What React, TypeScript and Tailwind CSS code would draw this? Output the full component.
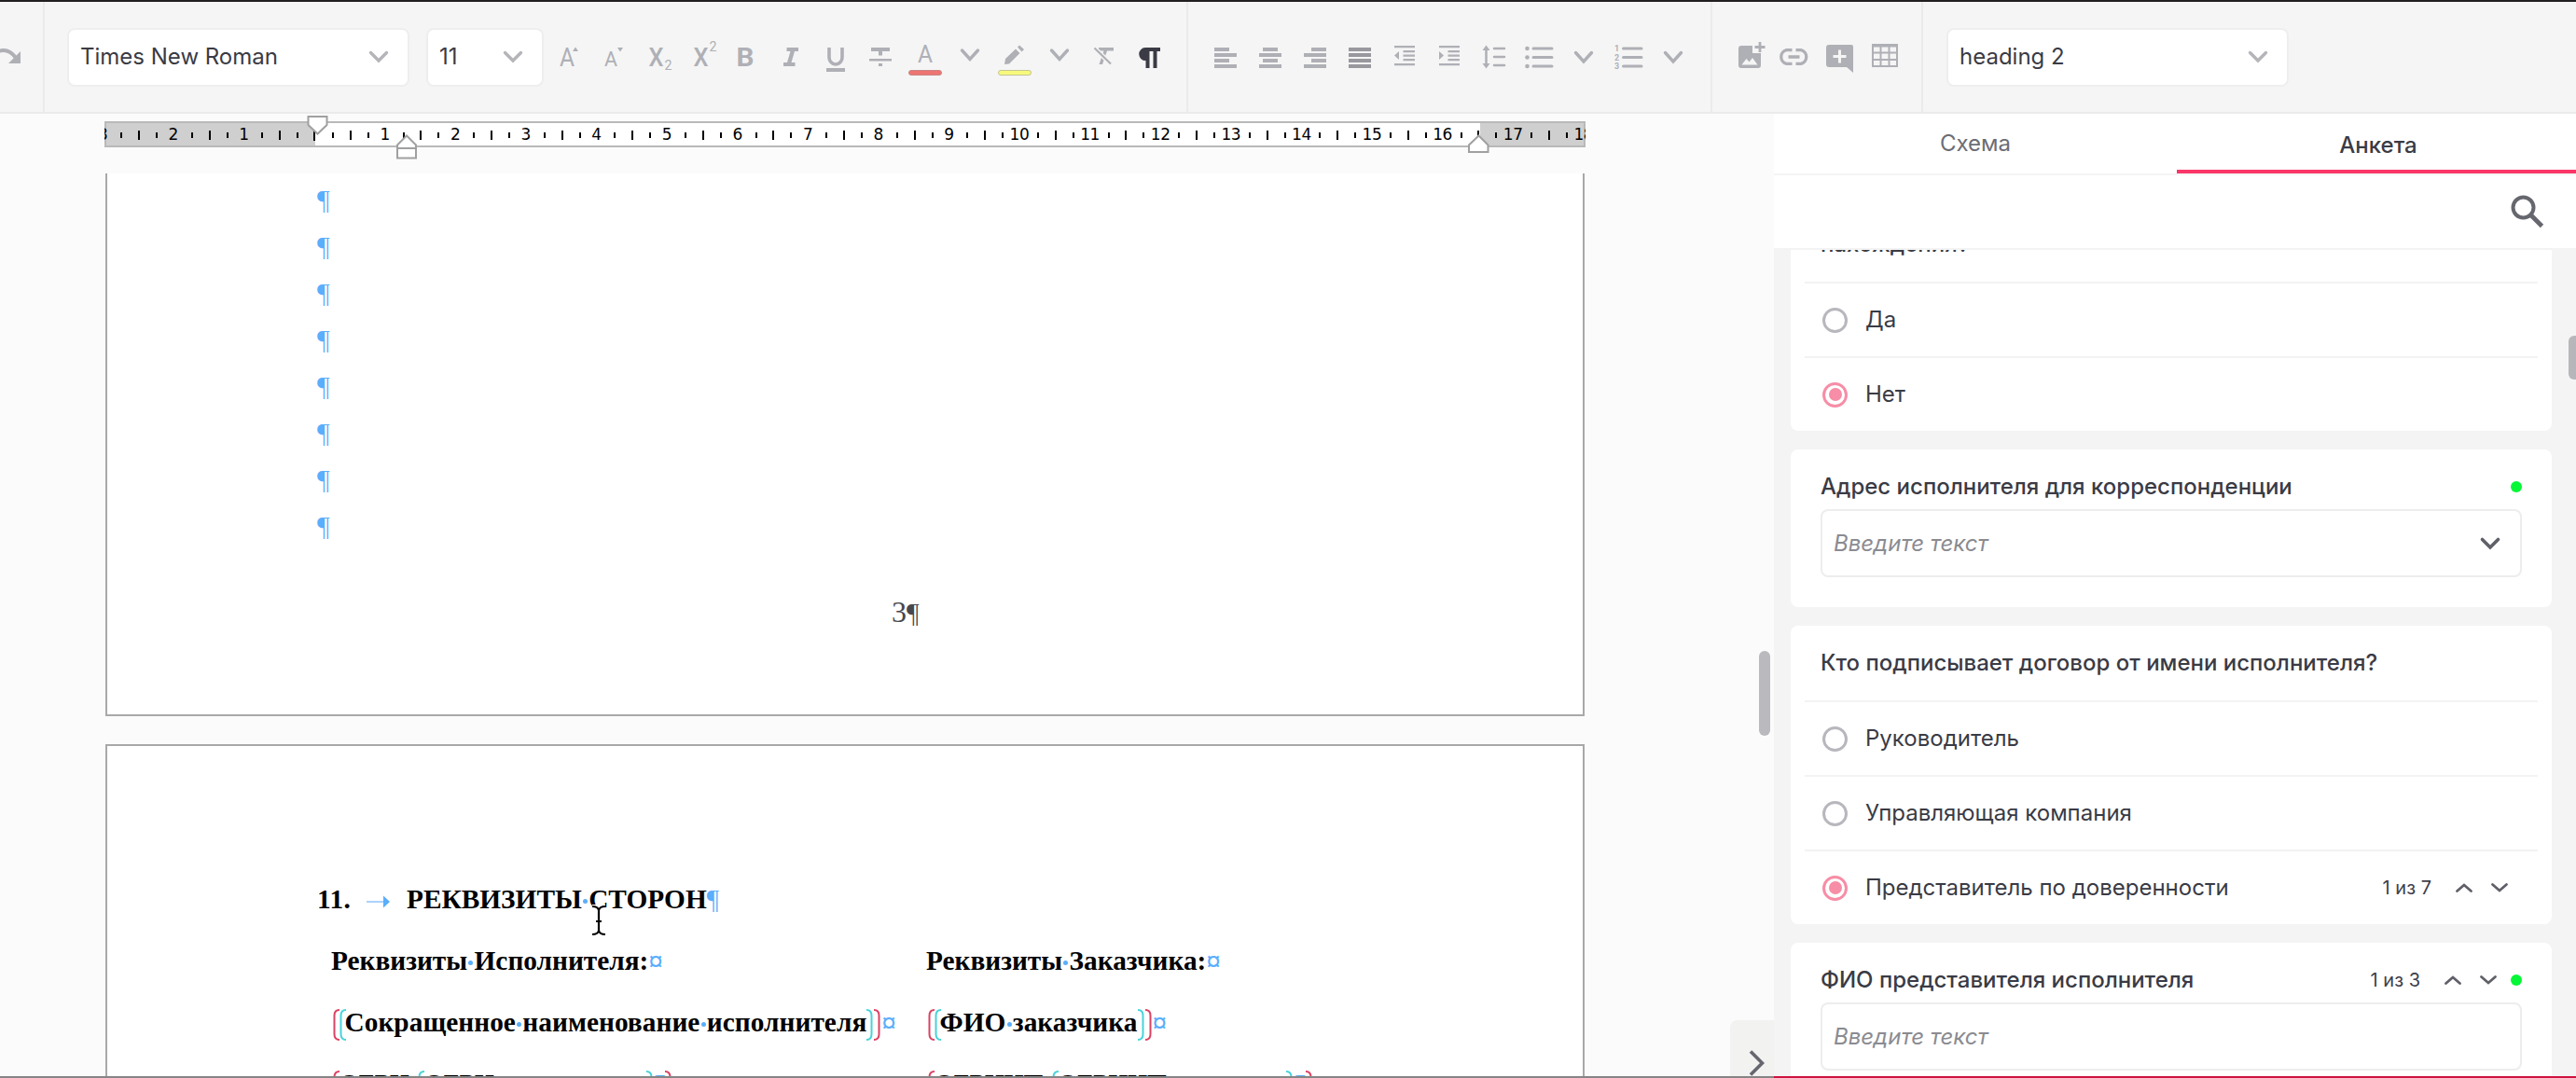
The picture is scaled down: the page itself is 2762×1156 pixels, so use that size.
import React, { useState } from 'react';

const ICON = '#afb0b6';

const Slot: React.FC<{ title: string; children: React.ReactNode }> = ({ title, children }) => (
  <button title={title} className="w-12 h-12 shrink-0">
    <svg width="48" height="48" viewBox="0 0 48 48" fill={ICON} className="block overflow-visible">
      {children}
    </svg>
  </button>
);

interface GlyphProps {
  x: number;
  y: number;
  size: number;
  width?: number;
  weight?: number;
  children: string;
}

const Glyph: React.FC<GlyphProps> = ({ x, y, size, width, weight = 400, children }) => (
  <text
    x={x}
    y={y}
    fontSize={size}
    fontWeight={weight}
    textLength={width}
    lengthAdjust="spacingAndGlyphs"
    className="font-['Roboto',sans-serif]"
  >
    {children}
  </text>
);

const SlotChevron: React.FC<{ y?: number }> = ({ y = 18 }) => (
  <Slot title="Ещё">
    <path d={`M15.5 ${y}L24 ${y + 9.5}L32.5 ${y}`} fill="none" stroke={ICON} strokeWidth="3.4" strokeLinecap="round" />
  </Slot>
);

interface ChevronProps {
  w?: number;
  h?: number;
  up?: boolean;
  color?: string;
  stroke?: number;
}

const Chevron: React.FC<ChevronProps> = ({ w = 20, h = 12, up, color = '#b5b5b9', stroke = 3.4 }) => (
  <svg width={w} height={h} viewBox={`0 0 ${w} ${h}`} fill="none" className="shrink-0 overflow-visible">
    <path
      d={up ? `M1.5 ${h - 1.5}L${w / 2} 2L${w - 1.5} ${h - 1.5}` : `M1.5 1.5L${w / 2} ${h - 2}L${w - 1.5} 1.5`}
      stroke={color}
      strokeWidth={stroke}
      strokeLinecap="round"
    />
  </svg>
);

const Select: React.FC<{ value: string; className: string }> = ({ value, className }) => (
  <div className={`h-[63px] shrink-0 bg-white border-2 border-[#eeeeee] rounded-lg flex items-center justify-between pl-3 pr-[21px] text-[24px] text-[#3a3b45] ${className}`}>
    <span className="whitespace-nowrap">{value}</span>
    <Chevron />
  </div>
);

const Divider = () => <div className="w-0.5 h-full shrink-0 bg-[#ebebeb]" />;

const Toolbar = () => (
  <div className="h-[122px] shrink-0 bg-[#f5f5f5] border-t-2 border-t-[#211f20] border-b-2 border-b-[#ebebeb] flex items-center">
    <div className="w-[46px] shrink-0">
      <svg width="24" height="18" viewBox="0 0 24 18" fill="none">
        <path d="M-4 4C4 0 11 2 17 10" stroke={ICON} strokeWidth="4" />
        <path d="M22 3V16H9Z" fill={ICON} />
      </svg>
    </div>
    <Divider />

    <div className="w-[1224px] shrink-0 flex items-center pl-6">
      <Select value="Times New Roman" className="w-[367px]" />
      <Select value="11" className="w-[126px] ml-[18px]" />
      <div className="flex ml-px">
        <Slot title="Увеличить шрифт">
          <Glyph x={16} y={34} size={27} width={16}>A</Glyph>
          <path d="M30 18L33 13.5L36 18Z" />
        </Slot>
        <Slot title="Уменьшить шрифт">
          <Glyph x={16} y={34} size={22} width={14}>A</Glyph>
          <path d="M30 14L33 18.5L36 14Z" />
        </Slot>
        <Slot title="Подстрочный">
          <Glyph x={15.5} y={34} size={27} width={16} weight={500}>X</Glyph>
          <Glyph x={32.5} y={38} size={14} width={8}>2</Glyph>
        </Slot>
        <Slot title="Надстрочный">
          <Glyph x={15.5} y={34} size={27} width={16} weight={500}>X</Glyph>
          <Glyph x={32.5} y={18} size={14} width={8}>2</Glyph>
        </Slot>
        <Slot title="Полужирный">
          <Glyph x={13.5} y={34} size={28} width={19} weight={700}>B</Glyph>
        </Slot>
        <Slot title="Курсив">
          <path d="M19.5 14H32V18H28L24.5 30H28.5V34H16V30H20L23.5 18H19.5Z" />
        </Slot>
        <Slot title="Подчеркнутый">
          <path d="M17 14V24.5A7 7.5 0 0 0 31 24.5V14" fill="none" stroke={ICON} strokeWidth="3.6" />
          <rect x="14" y="36" width="20" height="4" />
        </Slot>
        <Slot title="Зачеркнутый">
          <path d="M14 14H34V18H26V22.5H22V18H14ZM12 26H36V28.5H12ZM22 31H26V34H22Z" />
        </Slot>
        <Slot title="Цвет текста">
          <Glyph x={16} y={30} size={26} width={16}>A</Glyph>
          <rect x="6.5" y="38.5" width="35" height="5" rx="2.5" fill="#ee7572" stroke="#c98583" />
        </Slot>
        <SlotChevron y={17} />
        <Slot title="Маркер">
          <path d="M13 32L14 26L25 15.5L29.5 20L18 31.5ZM27 13.5L29 11.5L34 16L31.5 18.5Z" />
          <rect x="6.5" y="38.5" width="35" height="5" rx="2.5" fill="#f7f97c" stroke="#c4c592" />
        </Slot>
        <SlotChevron y={17} />
        <Slot title="Очистить формат">
          <path d="M18 14H34V17.5H27L22 32H18.5L23.5 17.5H18Z" />
          <path d="M13.5 14.5L31 31.5" stroke="#f5f5f5" strokeWidth="5" />
          <path d="M13.5 14.5L31 31.5" stroke={ICON} strokeWidth="2.2" />
        </Slot>
        <Slot title="Непечатаемые символы">
          <path d="M20 14H36V18H32.5V36H28.5V18H24.5V36H20.5V28A7 7 0 0 1 20 14Z" fill="#3a3b45" />
        </Slot>
      </div>
    </div>
    <Divider />

    <div className="w-[560px] shrink-0 flex pl-4">
      <Slot title="По левому краю">
        <path d="M12 14H28V18H12ZM12 20H36V24H12ZM12 26H28V30H12ZM12 32H36V36H12Z" />
      </Slot>
      <Slot title="По центру">
        <path d="M16 14H32V18H16ZM12 20H36V24H12ZM16 26H32V30H16ZM12 32H36V36H12Z" />
      </Slot>
      <Slot title="По правому краю">
        <path d="M20 14H36V18H20ZM12 20H36V24H12ZM20 26H36V30H20ZM12 32H36V36H12Z" />
      </Slot>
      <Slot title="По ширине">
        <path d="M12 14H36V18H12ZM12 20H36V24H12ZM12 26H36V30H12ZM12 32H36V36H12Z" fill="#98989e" />
      </Slot>
      <Slot title="Уменьшить отступ">
        <path d="M13 12H35V14.3H13ZM22.5 17H35V19.3H22.5ZM22.5 21.5H35V23.8H22.5ZM22.5 26H35V28.3H22.5ZM13 31H35V33.3H13ZM18 18V27L13 22.5Z" />
      </Slot>
      <Slot title="Увеличить отступ">
        <path d="M13 12H35V14.3H13ZM22.5 17H35V19.3H22.5ZM22.5 21.5H35V23.8H22.5ZM22.5 26H35V28.3H22.5ZM13 31H35V33.3H13ZM13 18V27L18 22.5Z" />
      </Slot>
      <Slot title="Межстрочный интервал">
        <path d="M24 15H35M24 24H35M24 33H35M15.5 15V33" stroke={ICON} strokeWidth="2.5" strokeLinecap="round" />
        <path d="M11.5 17L15.5 11.5L19.5 17ZM11.5 31L15.5 36.5L19.5 31Z" />
      </Slot>
      <Slot title="Маркированный список">
        <path d="M18 15H38M18 24.5H38M18 34H38" stroke={ICON} strokeWidth="3" strokeLinecap="round" />
        <circle cx="11.5" cy="15" r="2.3" />
        <circle cx="11.5" cy="24.5" r="2.3" />
        <circle cx="11.5" cy="34" r="2.3" />
      </Slot>
      <SlotChevron y={19.5} />
      <Slot title="Нумерованный список">
        <path d="M18.5 15H38M18.5 24.5H38M18.5 34H38" stroke={ICON} strokeWidth="3" strokeLinecap="round" />
        <Glyph x={9} y={18} size={9} weight={700}>1</Glyph>
        <Glyph x={9} y={27.5} size={9} weight={700}>2</Glyph>
        <Glyph x={9} y={37} size={9} weight={700}>3</Glyph>
      </Slot>
      <SlotChevron y={19.5} />
    </div>
    <Divider />

    <div className="w-[224px] shrink-0 flex pl-[17px]">
      <Slot title="Изображение">
        <path d="M14 12H26V20H35V33A3 3 0 0 1 32 36H14A3 3 0 0 1 11 33V15A3 3 0 0 1 14 12Z" />
        <path d="M14.5 32.5L19.5 26L22.5 29.5L26 25L31.5 32.5Z" fill="#f5f5f5" />
        <path d="M34 8V19M28.5 13.5H39.5" stroke={ICON} strokeWidth="2.8" />
      </Slot>
      <Slot title="Ссылка">
        <g fill="none" stroke={ICON} strokeWidth="3.3">
          <path d="M20.5 16.7H14.5A7.5 7.5 0 0 0 14.5 31.3H20.5M24.5 16.7H30A7.5 7.5 0 0 1 30 31.3H24.5M16.5 24H28.5" />
        </g>
      </Slot>
      <Slot title="Комментарий">
        <path d="M12 11H36A2 2 0 0 1 38 13V41L31 35H12A3 3 0 0 1 9 32V14A3 3 0 0 1 12 11Z" />
        <path d="M23.5 16.5V30.5M16.5 23.5H30.5" stroke="#f5f5f5" strokeWidth="3" />
      </Slot>
      <Slot title="Таблица">
        <path d="M10 10H38V35H10ZM12 13.500V18.500H18.500V13.500ZM20.500 13.500V18.500H27.500V13.500ZM29.500 13.500V18.500H36V13.500ZM12 20.500V26H18.500V20.500ZM20.500 20.500V26H27.500V20.500ZM29.500 20.500V26H36V20.500ZM12 28V33H18.500V28ZM20.500 28V33H27.500V28ZM29.500 28V33H36V28Z" fillRule="evenodd" />
      </Slot>
    </div>
    <Divider />
    <Select value="heading 2" className="w-[367px] ml-[25px]" />
  </div>
);

const CM = 75.6;
const ZERO = 226;

const Ruler = () => {
  const marks = [];
  for (let q = -11; q <= 71; q++) {
    const x = ZERO + (q * CM) / 4;
    if (q % 4 !== 0) {
      const half = q % 2 === 0;
      marks.push(<rect key={q} x={Math.round(x) - 1} y={half ? 10 : 12} width="2" height={half ? 10 : 6} />);
    }
  }
  const numbers = [-3, -2, -1, 1, 2, 3, 4, 5, 6, 7, 8, 9, 10, 11, 12, 13, 14, 15, 16, 17, 18];

  return (
    <div className="relative mt-2 ml-28 w-[1588px] h-7">
      <svg width="1588" height="28" className="block">
        <rect width="1588" height="28" fill="#ffffff" />
        <rect width="226" height="28" fill="#cfcfcf" />
        <rect x="1475" width="113" height="28" fill="#cfcfcf" />
        <rect x="1" y="1" width="1586" height="26" fill="none" stroke="#b9b9b9" strokeWidth="2" />
        {marks}
        <rect x="224" y="10" width="2" height="11" />
        <rect x="1472" y="10" width="2" height="8" />
        {numbers.map(n => (
          <text
            key={n}
            x={ZERO - 1 + n * CM}
            y="20"
            textAnchor="middle"
            fontSize="17"
            className="font-['DejaVu_Sans',sans-serif] tracking-[-0.4px]"
          >
            {Math.abs(n)}
          </text>
        ))}
      </svg>
      {/* indent markers */}
      <svg className="absolute left-[217px] -top-1.5" width="23" height="21" viewBox="0 0 23 21">
        <path d="M1.5 1H21.5V10L11.5 19.5L1.5 10Z" fill="#fff" stroke="#a0a0a0" strokeWidth="2" />
      </svg>
      <svg className="absolute left-[313px] top-[14px]" width="23" height="27" viewBox="0 0 23 27">
        <path d="M1 25.5V11.5L11 1.5L21 11.5V25.5ZM1 15H21" fill="#fff" stroke="#a0a0a0" strokeWidth="2" />
      </svg>
      <svg className="absolute left-[1462px] top-[14px]" width="23" height="21" viewBox="0 0 23 21">
        <path d="M1 19V11.5L11.5 1.5L21.5 11.5V19Z" fill="#fff" stroke="#a0a0a0" strokeWidth="2" />
      </svg>
    </div>
  );
};

const Mark: React.FC<{ children: string }> = ({ children }) => (
  <span className="font-normal text-[#5aaefc]">{children}</span>
);

const CellMark = () => (
  <span className="font-['Liberation_Sans',sans-serif] font-normal text-[#5aaefc] text-[28px] leading-none">¤</span>
);

const Dot = () => <span className="inline-block w-[5px] h-[5px] mx-[1.2px] rounded-full bg-[#5aaefc] align-middle -mt-0.5" />;

const Bracket: React.FC<{ color: string; right?: boolean }> = ({ color, right }) => (
  <svg width="7" height="34" viewBox="0 0 7 34" fill="none" className="shrink-0 mt-1">
    <path d={right ? 'M0 1Q5.5 1 5.5 7V27Q5.5 33 0 33' : 'M7 1Q1.5 1 1.5 7V27Q1.5 33 7 33'} stroke={color} strokeWidth="2" />
  </svg>
);

const RED = '#dc4263';
const CYAN = '#48d3d9';

const Field: React.FC<{ children: React.ReactNode }> = ({ children }) => (
  <>
    <Bracket color={RED} />
    <Bracket color={CYAN} />
    <span className="-ml-[1.5px] tracking-[0.04px]">{children}</span>
    <Bracket color={CYAN} right />
    <span className="w-px" />
    <Bracket color={RED} right />
  </>
);

const LabeledField: React.FC<{ label: string; children: React.ReactNode }> = ({ label, children }) => (
  <>
    <Bracket color={RED} />
    <span className="mr-0.5 -mt-[3px] text-[26.67px]">{label}<Dot /></span>
    <Bracket color={CYAN} />
    <span className="-mt-[3px] text-[26.67px]">{children}</span>
    <Bracket color={CYAN} right />
    <Mark>¶</Mark>
    <Bracket color={RED} right />
  </>
);

const Pages = () => (
  <div className="w-[1586px] ml-[113px] mt-7 font-['Liberation_Serif',serif] text-[29.33px] text-black">
    <div className="h-[582px] bg-white border-2 border-t-0 border-[#a8a8a8] pl-[225px] pt-[3px]">
      {Array.from({ length: 8 }).map((_, i) => (
        <div key={i} className="leading-[50px] h-[50px] text-[30px]"><Mark>¶</Mark></div>
      ))}
      <div className="mt-[42px] leading-[50px] text-[32px] text-[#47484e] pl-[616px]">
        3<span className="text-[30px]">¶</span>
      </div>
    </div>
    <div className="h-[420px] mt-[30px] bg-white border-2 border-[#a8a8a8] pt-[132px] font-bold">
      <div className="h-[66px] flex items-center pl-[225px] whitespace-pre">
        <span className="w-[53px] tracking-[0.4px]">11.</span>
        <svg width="25" height="14" viewBox="0 0 25 14" className="mr-[18px] mt-1">
          <path d="M0 7H19" stroke="#8cc5fb" strokeWidth="1.5" />
          <path d="M18 0.5L25 7L18 13.5Z" fill="#5aaefc" />
        </svg>
        <span>РЕКВИЗИТЫ<Dot />СТОРОН<Mark>¶</Mark></span>
      </div>
      <div className="grid grid-cols-[638px_1fr] auto-rows-[66px] pl-[240px] whitespace-nowrap">
        <div className="flex items-center">
          <span>Реквизиты<Dot />Исполнителя:<CellMark /></span>
        </div>
        <div className="flex items-center">
          <span>Реквизиты<Dot />Заказчика:<CellMark /></span>
        </div>
        <div className="flex items-center pl-0.5">
          <Field>Сокращенное<Dot />наименование<Dot />исполнителя</Field>
          <span className="ml-px"><CellMark /></span>
        </div>
        <div className="flex items-center pl-0.5">
          <Field>ФИО<Dot />заказчика</Field>
          <span className="ml-px"><CellMark /></span>
        </div>
        <div className="flex items-center pl-0.5">
          <LabeledField label="ОГРН">ОГРН<Dot />исполнителя</LabeledField>
        </div>
        <div className="flex items-center pl-0.5">
          <LabeledField label="ОГРНИП">ОГРНИП<Dot />заказчика</LabeledField>
        </div>
      </div>
    </div>
  </div>
);

const Radio: React.FC<{ checked: boolean }> = ({ checked }) => (
  <span className={`w-[27px] h-[27px] rounded-full border-3 flex items-center justify-center shrink-0 ${checked ? 'border-[#f78da6]' : 'border-[#b7b7bd]'}`}>
    {checked && <span className="w-[14px] h-[14px] rounded-full bg-[#f78da6]" />}
  </span>
);

const Counter: React.FC<{ text: string }> = ({ text }) => (
  <div className="flex items-center ml-auto text-[20px] text-[#3f4048]">
    <span>{text}</span>
    <span className="ml-[26px] flex gap-5">
      <Chevron w={18} h={10} up color="#5f6068" stroke={2.8} />
      <Chevron w={18} h={10} color="#5f6068" stroke={2.8} />
    </span>
  </div>
);

interface Option {
  label: string;
  counter?: string;
}

const ChoiceCard: React.FC<{ title: string; options: Option[]; initial: number }> = ({ title, options, initial }) => {
  const [selected, setSelected] = useState(initial);

  return (
    <div className="bg-white rounded-lg shrink-0 px-[15px]">
      <div className="h-20 flex items-center px-[17px] font-medium">{title}</div>
      {options.map((o, i) => (
        <div
          key={o.label}
          onClick={() => setSelected(i)}
          className="h-20 border-t-2 border-[#f3f3f3] flex items-center pl-[19px] pr-8"
        >
          <Radio checked={selected === i} />
          <span className="ml-[19px]">{o.label}</span>
          {o.counter && <Counter text={o.counter} />}
        </div>
      ))}
    </div>
  );
};

const TextCard: React.FC<{ title: string; counter?: string; dropdown?: boolean }> = ({ title, counter, dropdown }) => (
  <div className="h-[169px] bg-white rounded-lg shrink-0 px-8 pt-4">
    <div className="h-12 flex items-center">
      <span className="font-medium">{title}</span>
      {counter ? <Counter text={counter} /> : <span className="ml-auto" />}
      <span className="ml-[15px] w-3 h-3 rounded-full bg-[#07f736]" />
    </div>
    <div className="h-[73px] border-2 border-[#ededed] rounded-lg flex items-center justify-between pl-3 pr-[22px]">
      <span className="italic text-[#8b8b91]">Введите текст</span>
      {dropdown && <Chevron color="#5f6068" stroke={3.6} />}
    </div>
  </div>
);

const SidePanel = () => {
  const [tab, setTab] = useState('form');

  return (
    <div className="w-[860px] shrink-0 flex flex-col bg-white text-[24px] text-[#3a3b45]">
      <div className="h-[66px] shrink-0 flex border-b-2 border-[#f5f5f5]">
        <button onClick={() => setTab('schema')} className="w-[432px] text-[#6c6d75]">Схема</button>
        <button
          onClick={() => setTab('form')}
          className={`flex-1 pt-[7px] pl-1 border-b-4 font-medium ${tab === 'form' ? 'border-[#fa3768]' : 'border-transparent'}`}
        >
          Анкета
        </button>
      </div>
      <div className="h-20 shrink-0 border-b-2 border-[#f3f3f3] flex items-center justify-end pr-[34px]">
        <svg width="36" height="36" viewBox="0 0 36 36" fill="none" stroke="#66676e">
          <circle cx="13.5" cy="13.5" r="11" strokeWidth="4" />
          <path d="M22 22L33.5 33.5" strokeWidth="4.8" />
        </svg>
      </div>
      <div className="relative flex-1 min-h-0 overflow-hidden bg-[#f4f4f4] pl-[18px] pr-[26px] flex flex-col">
        <div className="-mt-[46px] flex flex-col gap-5">
          <ChoiceCard title="нахождения?" options={[{ label: 'Да' }, { label: 'Нет' }]} initial={1} />
          <TextCard title="Адрес исполнителя для корреспонденции" dropdown />
          <ChoiceCard
            title="Кто подписывает договор от имени исполнителя?"
            options={[
              { label: 'Руководитель' },
              { label: 'Управляющая компания' },
              { label: 'Представитель по доверенности', counter: '1 из 7' },
            ]}
            initial={2}
          />
          <TextCard title="ФИО представителя исполнителя" counter="1 из 3" />
        </div>
        <div className="absolute right-0 top-[92px] w-2 h-[47px] rounded-l-md bg-[#b7b7bb]" />
      </div>
    </div>
  );
};

export default function App() {
  return (
    <div className="relative w-[2762px] h-[1156px] overflow-hidden flex flex-col bg-[#fbfbfb] font-['Inter',sans-serif] leading-normal">
      <Toolbar />
      <div className="flex flex-1 min-h-0">
        <div className="relative flex-1 min-w-0 overflow-hidden">
          <Ruler />
          <Pages />
          <div className="absolute right-1 top-[576px] w-3 h-[91px] rounded-full bg-[#b9b9be]" />
          <div className="absolute right-0 bottom-0 w-[47px] h-[62px] rounded-tl-lg bg-[#f2f2f1] pl-5 pt-8">
            <svg width="17" height="28" viewBox="0 0 17 28" fill="none">
              <path d="M2 1.5L14.5 14L2 26.5" stroke="#66676e" strokeWidth="3.6" />
            </svg>
          </div>
          {/* text cursor */}
          <svg className="absolute left-[634px] top-[848px]" width="16" height="34" viewBox="0 0 16 34" fill="none">
            <path d="M1 2Q7 2 8 6Q9 2 15 2M1 32Q7 32 8 28Q9 32 15 32M8 6V28M5 18H11" stroke="#fff" strokeWidth="5" />
            <path d="M1 2Q7 2 8 6Q9 2 15 2M1 32Q7 32 8 28Q9 32 15 32M8 6V28M5 18H11" stroke="#000" strokeWidth="2.2" />
          </svg>
        </div>
        <SidePanel />
      </div>
      <div className="absolute inset-x-0 bottom-0 h-0.5 flex">
        <div className="flex-1 bg-[#858585]" />
        <div className="w-[860px] bg-[#cf1340]" />
      </div>
    </div>
  );
}
